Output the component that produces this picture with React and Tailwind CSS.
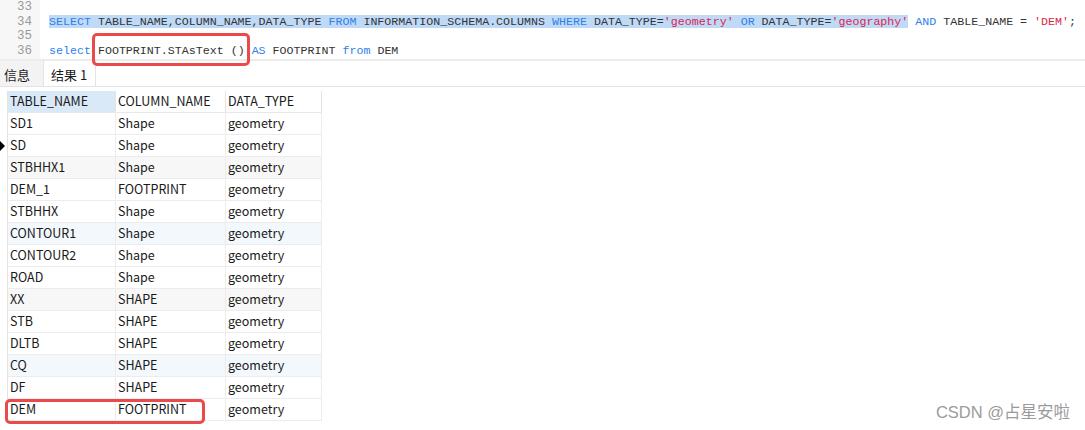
import React from "react";

const rows = [
  ["SD1", "Shape"],
  ["SD", "Shape"],
  ["STBHHX1", "Shape"],
  ["DEM_1", "FOOTPRINT"],
  ["STBHHX", "Shape"],
  ["CONTOUR1", "Shape"],
  ["CONTOUR2", "Shape"],
  ["ROAD", "Shape"],
  ["XX", "SHAPE"],
  ["STB", "SHAPE"],
  ["DLTB", "SHAPE"],
  ["CQ", "SHAPE"],
  ["DF", "SHAPE"],
  ["DEM", "FOOTPRINT"],
];

const mono = { fontFamily: '"Liberation Mono", "DejaVu Sans Mono", monospace' };

const Kw = ({ children }) => <span className="text-[#2f7fe8]">{children}</span>;
const Str = ({ children }) => <span className="text-[#e0244a]">{children}</span>;

const rowBg = (i) => {
  if (i % 6 === 2) return "bg-[#f7f7f7]";
  if (i % 6 === 5) return "bg-[#f3f8fd]";
  return "bg-white";
};

export default function App() {
  return (
    <div
      className="relative w-[1085px] h-[430px] overflow-hidden bg-white text-[#1a1a1a]"
      style={{ fontFamily: '"Noto Sans CJK SC", "Noto Sans", sans-serif' }}
    >
      {/* Editor */}
      <div className="flex h-[59px] text-[11.65px] leading-[14.7px]" style={mono}>
        <div className="w-[40px] bg-[#f7f7f7] pr-[8px] text-right text-[12.5px] text-[#9a9a9a]">
          <div>33</div>
          <div>34</div>
          <div>35</div>
          <div>36</div>
        </div>
        <div className="pl-[9px] whitespace-pre text-[#333]">
          <div>&nbsp;</div>
          <div>
            <span className="bg-[#bfdaf7]">
              <Kw>SELECT</Kw> TABLE_NAME,COLUMN_NAME,DATA_TYPE <Kw>FROM</Kw>{" "}
              INFORMATION_SCHEMA.COLUMNS <Kw>WHERE</Kw> DATA_TYPE=<Str>'geometry'</Str>{" "}
              <Kw>OR</Kw> DATA_TYPE=<Str>'geography'</Str>
            </span>{" "}
            <Kw>AND</Kw> TABLE_NAME = <Str>'DEM'</Str>;
          </div>
          <div>&nbsp;</div>
          <div>
            <Kw>select</Kw>{" "}
            <span className="relative">
              FOOTPRINT.STAsText ()
              <span className="absolute left-[-6px] right-[-5px] top-[-11px] bottom-[-9px] rounded-[5px] border-[3px] border-[#ea4a4a]" />
            </span>{" "}
            <Kw>AS</Kw> FOOTPRINT <Kw>from</Kw> DEM
          </div>
        </div>
      </div>

      {/* Tabs */}
      <div className="h-[2px] bg-[#ececec]" />
      <div className="flex h-[26px] items-end border-b border-[#e3e3e3] bg-white text-[13px]">
        <div className="flex h-full w-[44px] items-center bg-[#f3f3f3] pl-[4px] pt-[2px] border-r border-[#e3e3e3]">
          信息
        </div>
        <div className="flex h-full w-[52px] items-center bg-white pl-[7px] pt-[2px] border-r border-[#e3e3e3]">
          结果 1
        </div>
      </div>

      {/* Grid */}
      <div className="flex pt-[4px] text-[12.5px]">
        <div className="w-[8px] border-r border-[#e3e3e3]">
          <div className="h-[22px]" />
          {rows.map((r, i) => (
            <div key={i} className="relative h-[22px]">
              {i === 1 && (
                <span className="absolute left-0 top-[6px] h-0 w-0 border-y-[5px] border-l-[5px] border-y-transparent border-l-black" />
              )}
            </div>
          ))}
        </div>
        <div>
          <div className="flex h-[22px] border-b border-[#e8e8e8]">
            <div className="flex w-[108px] items-center bg-[#dae9f8] pl-[2px] border-r border-[#e3e3e3]">
              TABLE_NAME
            </div>
            <div className="flex w-[110px] items-center pl-[2px] border-r border-[#e3e3e3]">
              COLUMN_NAME
            </div>
            <div className="flex w-[96px] items-center pl-[2px] border-r border-[#e3e3e3]">
              DATA_TYPE
            </div>
          </div>
          {rows.map((r, i) => (
            <div key={i} className={`flex h-[22px] border-b border-[#ececec] ${rowBg(i)}`}>
              <div className="flex w-[108px] items-center pl-[2px] border-r border-[#ececec]">
                {r[0]}
              </div>
              <div className="flex w-[110px] items-center pl-[2px] border-r border-[#ececec]">
                {r[1]}
              </div>
              <div className="flex w-[96px] items-center pl-[2px] border-r border-[#ececec]">
                geometry
              </div>
            </div>
          ))}
        </div>
      </div>

      {/* highlight around last row */}
      <div className="absolute left-[5px] top-[399px] h-[25px] w-[200px] rounded-[5px] border-[3px] border-[#ea4a4a]" />

      <div
        className="absolute right-[15px] top-[400px] text-[16.5px] text-[#9b9b9b]"
        style={{ fontFamily: '"Liberation Sans", "Noto Sans CJK SC", sans-serif' }}
      >
        CSDN @占星安啦
      </div>
    </div>
  );
}
